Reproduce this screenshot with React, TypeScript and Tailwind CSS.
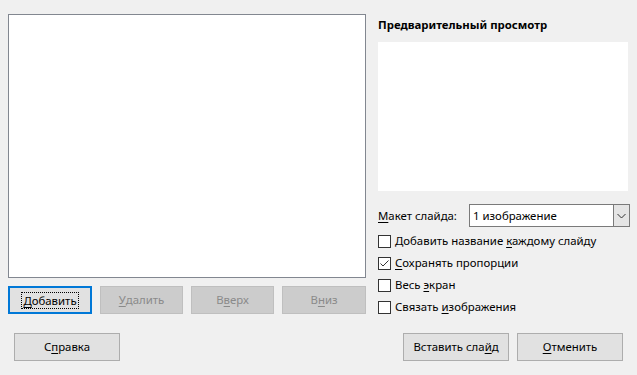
const font = { fontFamily: '"Noto Sans", "Open Sans", sans-serif' };

function U({ children }: { children: React.ReactNode }) {
  return <span className="underline underline-offset-2">{children}</span>;
}

function Btn({
  children,
  disabled,
  primary,
  className = "",
}: {
  children: React.ReactNode;
  disabled?: boolean;
  primary?: boolean;
  className?: string;
}) {
  if (primary) {
    return (
      <div className={`flex items-center justify-center border-2 border-[#0078d7] bg-[#e1e1e1] text-[#000] ${className}`}>
        <span className="border border-dotted border-black px-[1px] leading-[15px]">{children}</span>
      </div>
    );
  }
  return (
    <div
      className={`flex items-center justify-center border ${
        disabled ? "border-[#bfbfbf] bg-[#cccccc] text-[#8a8a8a]" : "border-[#adadad] bg-[#e1e1e1] text-black"
      } ${className}`}
    >
      {children}
    </div>
  );
}

function Check({ checked, children }: { checked?: boolean; children: React.ReactNode }) {
  return (
    <div className="flex h-[22px] items-center gap-[4px]">
      <div className="flex h-[13px] w-[13px] items-center justify-center border border-[#333] bg-white">
        {checked && (
          <svg width="11" height="11" viewBox="0 0 11 11">
            <path d="M1.5 5.5 L4 8 L9.5 2.5" fill="none" stroke="#333" strokeWidth="1" />
          </svg>
        )}
      </div>
      <span>{children}</span>
    </div>
  );
}

export default function App() {
  return (
    <div className="h-[375px] w-[637px] bg-[#f0f0f0] text-[11.4px] text-black" style={font}>
      <div className="flex pl-[8px] pt-[14px]">
        {/* left list + buttons */}
        <div className="flex w-[358px] flex-col">
          <div className="h-[264px] border border-[#828790] bg-white" />
          <div className="mt-[8px] flex gap-[8px]">
            <Btn primary className="h-[28px] w-[84px]">
              <U>Д</U>обавить
            </Btn>
            <Btn disabled className="h-[28px] w-[83px]">
              <U>У</U>далить
            </Btn>
            <Btn disabled className="h-[28px] w-[83px]">
              В<U>в</U>ерх
            </Btn>
            <Btn disabled className="h-[28px] w-[84px]">
              В<U>н</U>из
            </Btn>
          </div>
        </div>

        {/* right panel */}
        <div className="ml-[12px] flex w-[252px] flex-col pt-[3px]">
          <div className="h-[16px] font-bold leading-[16px]">Предварительный просмотр</div>
          <div className="mt-[9px] h-[149px] w-[250px] bg-white" />
          <div className="mt-[13px] flex h-[23px] items-center">
            <span className="w-[91px]">
              <U>М</U>акет слайда:
            </span>
            <div className="flex h-[23px] flex-1 border border-[#7a7a7a] bg-white">
              <span className="flex-1 pl-[3px] leading-[21px]">1 изображение</span>
              <div className="flex w-[16px] items-center justify-center border-l border-[#7a7a7a] bg-[#e5e5e5]">
                <svg width="9" height="6" viewBox="0 0 9 6">
                  <path d="M0.5 1 L4.5 5 L8.5 1" fill="none" stroke="#333" strokeWidth="1" />
                </svg>
              </div>
            </div>
          </div>
          <div className="mt-[3px] flex flex-col">
            <Check>
              Добавить название <U>к</U>аждому слайду
            </Check>
            <Check checked>
              <U>С</U>охранять пропорции
            </Check>
            <Check>
              Весь <U>э</U>кран
            </Check>
            <Check>
              Связать <U>и</U>зображения
            </Check>
          </div>
        </div>
      </div>

      {/* bottom buttons */}
      <div className="mt-[15px] flex pl-[14px] pr-[14px]">
        <Btn className="h-[28px] w-[106px]">
          С<U>п</U>равка
        </Btn>
        <div className="flex-1" />
        <Btn className="h-[28px] w-[106px]">
          Вставить сла<U>й</U>д
        </Btn>
        <Btn className="ml-[8px] h-[28px] w-[106px]">
          <U>О</U>тменить
        </Btn>
      </div>
    </div>
  );
}
